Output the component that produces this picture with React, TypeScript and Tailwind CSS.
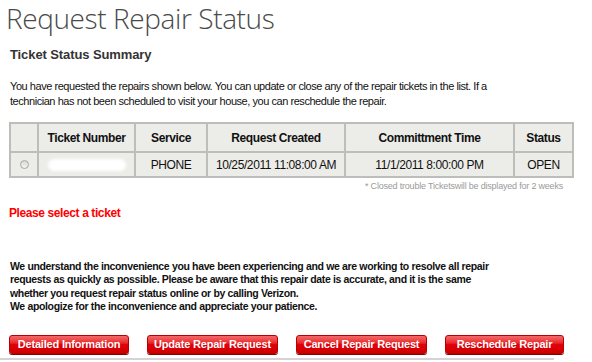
import React from "react";

const cols = [28, 97, 72, 138, 169, 59];

function RedButton({ label, w }: { label: string; w: string }) {
  return (
    <button
      className={`${w} h-[19px] rounded-[3px] border border-[#b80000] bg-gradient-to-b from-[#f4676b] via-[#e3000b] to-[#cc0000] text-white text-[11px] font-bold tracking-[-0.2px] leading-[17px] shadow-[0_1px_0_#8a0000] [font-family:'Liberation_Sans',Arial,sans-serif]`}
    >
      {label}
    </button>
  );
}

export default function App() {
  return (
    <div className="w-[592px] h-[362px] bg-white overflow-hidden relative [font-family:'Liberation_Sans',Arial,sans-serif] text-[#111]">
      <h1 className="pl-[6px] pt-0 text-[28px] leading-[36px] font-light text-[#4a4a4a] [font-family:'Open_Sans',sans-serif] tracking-[-0.4px]">
        Request Repair Status
      </h1>
      <h2 className="pl-[10px] mt-[11px] text-[13px] leading-[15px] font-bold text-[#333] tracking-[-0.1px]">
        Ticket Status Summary
      </h2>
      <p className="pl-[10px] mt-[17px] w-[500px] text-[11px] leading-[15px] tracking-[-0.45px] text-[#111]">
        You have requested the repairs shown below. You can update or close any of the repair tickets in the list. If a technician has not been scheduled to visit your house, you can reschedule the repair.
      </p>
      <table className="ml-[9px] mt-[13px] border-collapse border border-[#a4a4a4] text-[12px] tracking-[-0.4px] text-[#111] table-fixed w-[563px]">
        <colgroup>
          {cols.map((c, i) => (
            <col key={i} style={{ width: c }} />
          ))}
        </colgroup>
        <thead>
          <tr className="h-[29px] bg-[#ecece8]">
            <th className="border-2 border-[#bdbdb9]"></th>
            <th className="border-2 border-[#bdbdb9] font-bold">Ticket Number</th>
            <th className="border-2 border-[#bdbdb9] font-bold">Service</th>
            <th className="border-2 border-[#bdbdb9] font-bold">Request Created</th>
            <th className="border-2 border-[#bdbdb9] font-bold">Committment Time</th>
            <th className="border-2 border-[#bdbdb9] font-bold">Status</th>
          </tr>
        </thead>
        <tbody>
          <tr className="h-[25px] bg-[#ecece8] text-center">
            <td className="border-2 border-[#bdbdb9]">
              <div className="flex justify-center">
                <span className="block w-[9px] h-[9px] rounded-full border border-[#a8a8a8] bg-gradient-to-b from-[#d8d8d8] to-[#f4f4f4]"></span>
              </div>
            </td>
            <td className="border-2 border-[#bdbdb9]">
              <div className="flex justify-center">
                <span className="block w-[78px] h-[12px] rounded-full bg-white blur-[1.5px]"></span>
              </div>
            </td>
            <td className="border-2 border-[#bdbdb9]">PHONE</td>
            <td className="border-2 border-[#bdbdb9]">10/25/2011 11:08:00 AM</td>
            <td className="border-2 border-[#bdbdb9]">11/1/2011 8:00:00 PM</td>
            <td className="border-2 border-[#bdbdb9]">OPEN</td>
          </tr>
        </tbody>
      </table>
      <p className="w-[563px] text-right text-[9px] leading-[10px] mt-[3px] text-[#9a9a9a] tracking-[-0.2px]">
        * Closed trouble Ticketswill be displayed for 2 weeks
      </p>
      <p className="pl-[9px] mt-[15px] text-[12px] leading-[14px] font-bold text-[#ff0000] tracking-[-0.4px]">
        Please select a ticket
      </p>
      <p className="pl-[10px] mt-[40px] w-[500px] text-[10.5px] leading-[13.3px] font-bold text-[#111] tracking-[-0.35px]">
        We understand the inconvenience you have been experiencing and we are working to resolve all repair requests as quickly as possible. Please be aware that this repair date is accurate, and it is the same whether you request repair status online or by calling Verizon.
        <br />
        We apologize for the inconvenience and appreciate your patience.
      </p>
      <div className="flex pl-[9px] mt-[22px] gap-[18px]">
        <RedButton label="Detailed Information" w="w-[120px]" />
        <RedButton label="Update Repair Request" w="w-[131px]" />
        <RedButton label="Cancel Repair Request" w="w-[131px]" />
        <RedButton label="Reschedule Repair" w="w-[119px]" />
      </div>
      <div className="mt-[4px] w-[554px] h-[2px] bg-[#d4d4d4]"></div>
    </div>
  );
}
